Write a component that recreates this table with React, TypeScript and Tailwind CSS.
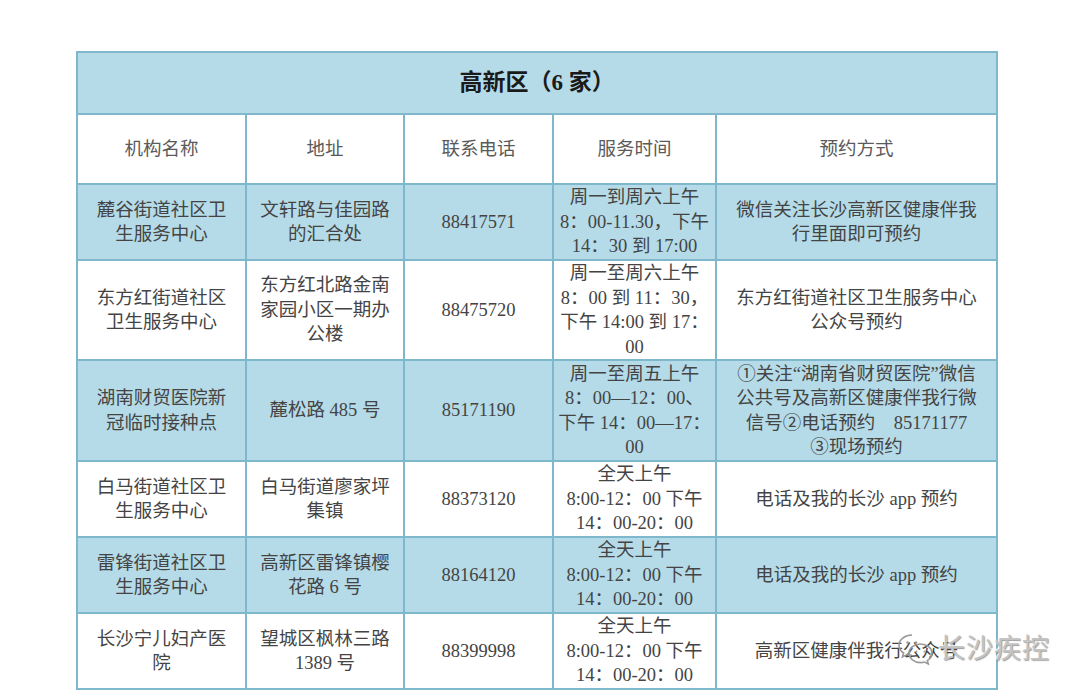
const FONT = '"Liberation Serif", "Noto Sans CJK SC", serif';

type Row = {
  blue: boolean;
  h: string;
  cells: string[][];
};

const later = ['全天上午', '8:00-12：00 下午', '14：00-20：00'];

const rows: Row[] = [
  {
    blue: true,
    h: 'h-[76px]',
    cells: [
      ['麓谷街道社区卫', '生服务中心'],
      ['文轩路与佳园路', '的汇合处'],
      ['88417571'],
      ['周一到周六上午', '8：00-11.30，下午', '14：30 到 17:00'],
      ['微信关注长沙高新区健康伴我', '行里面即可预约'],
    ],
  },
  {
    blue: false,
    h: 'h-[98px]',
    cells: [
      ['东方红街道社区', '卫生服务中心'],
      ['东方红北路金南', '家园小区一期办', '公楼'],
      ['88475720'],
      ['周一至周六上午', '8：00 到 11：30，', '下午 14:00 到 17：', '00'],
      ['东方红街道社区卫生服务中心', '公众号预约'],
    ],
  },
  {
    blue: true,
    h: 'h-[101px]',
    cells: [
      ['湖南财贸医院新', '冠临时接种点'],
      ['麓松路 485 号'],
      ['85171190'],
      ['周一至周五上午', '8：00—12：00、', '下午 14：00—17：', '00'],
      ['①关注“湖南省财贸医院”微信', '公共号及高新区健康伴我行微', '信号②电话预约　85171177', '③现场预约'],
    ],
  },
  {
    blue: false,
    h: 'h-[76px]',
    cells: [
      ['白马街道社区卫', '生服务中心'],
      ['白马街道廖家坪', '集镇'],
      ['88373120'],
      later,
      ['电话及我的长沙 app 预约'],
    ],
  },
  {
    blue: true,
    h: 'h-[76px]',
    cells: [
      ['雷锋街道社区卫', '生服务中心'],
      ['高新区雷锋镇樱', '花路 6 号'],
      ['88164120'],
      later,
      ['电话及我的长沙 app 预约'],
    ],
  },
  {
    blue: false,
    h: 'h-[76px]',
    cells: [
      ['长沙宁儿妇产医', '院'],
      ['望城区枫林三路', '1389 号'],
      ['88399998'],
      later,
      ['高新区健康伴我行公众号'],
    ],
  },
];

const headers = ['机构名称', '地址', '联系电话', '服务时间', '预约方式'];
const widths = ['w-[169px]', 'w-[158px]', 'w-[149px]', 'w-[163px]', 'w-[281px]'];

function WeChatMark() {
  return (
    <svg width="40" height="34" viewBox="0 0 40 34" fill="none" stroke="#9a9a9a" strokeWidth="1.6">
      <path d="M16 3C8.5 3 3 7.8 3 13.2c0 3.2 1.8 5.9 4.6 7.7L6.4 25l4.6-2.4c1.6.5 3.3.7 5 .7" />
      <path d="M24.5 12c-6.4 0-11.5 4.2-11.5 9.3s5.1 9.3 11.5 9.3c1.4 0 2.8-.2 4-.6l3.8 2-1-3.4c2.8-1.7 4.7-4.3 4.7-7.3 0-5.1-5.1-9.3-11.5-9.3z" />
      <circle cx="11.5" cy="10.5" r="1.2" fill="#9a9a9a" stroke="none" />
      <circle cx="20" cy="10.5" r="1.2" fill="#9a9a9a" stroke="none" />
      <circle cx="20.5" cy="19.5" r="1" fill="#9a9a9a" stroke="none" />
      <circle cx="28.5" cy="19.5" r="1" fill="#9a9a9a" stroke="none" />
    </svg>
  );
}

export default function App() {
  return (
    <div className="relative w-[1080px] h-[697px] bg-white pl-[76px] pt-[51px]" style={{ fontFamily: FONT }}>
      <table className="border-collapse table-fixed w-[920px]">
        <colgroup>
          {widths.map((w) => (
            <col key={w} className={w} />
          ))}
        </colgroup>
        <tbody>
          <tr className="h-[62px] bg-[#b5dbe8]">
            <td colSpan={5} className="border-2 border-[#7fb8cc] text-center text-[23px] font-bold text-[#1a1a1a]">
              高新区（6 家）
            </td>
          </tr>
          <tr className="h-[70px] bg-white">
            {headers.map((h) => (
              <td
                key={h}
                className="border-2 border-[#7fb8cc] text-center text-[18.5px] leading-[24px] text-[#5a5a5a]"
              >
                {h}
              </td>
            ))}
          </tr>
          {rows.map((r, ri) => (
            <tr key={ri} className={`${r.h} ${r.blue ? 'bg-[#b5dbe8]' : 'bg-white'}`}>
              {r.cells.map((lines, ci) => (
                <td
                  key={ci}
                  className="border-2 border-[#7fb8cc] text-center align-middle text-[18.5px] leading-[24.5px] text-[#444] p-0"
                >
                  {lines.map((l, li) => (
                    <div key={li} className="whitespace-nowrap">
                      {l}
                    </div>
                  ))}
                </td>
              ))}
            </tr>
          ))}
        </tbody>
      </table>

      {/* watermark */}
      <div className="absolute left-[896px] top-[632px] flex items-center gap-[2px]">
        <WeChatMark />
        <span
          className="text-[27px] leading-none text-[#c4c4c4] tracking-[1px]"
          style={{ textShadow: '1px 1px 1px rgba(80,80,80,0.55), -1px -1px 0 rgba(255,255,255,0.8)' }}
        >
          长沙疾控
        </span>
      </div>
    </div>
  );
}
